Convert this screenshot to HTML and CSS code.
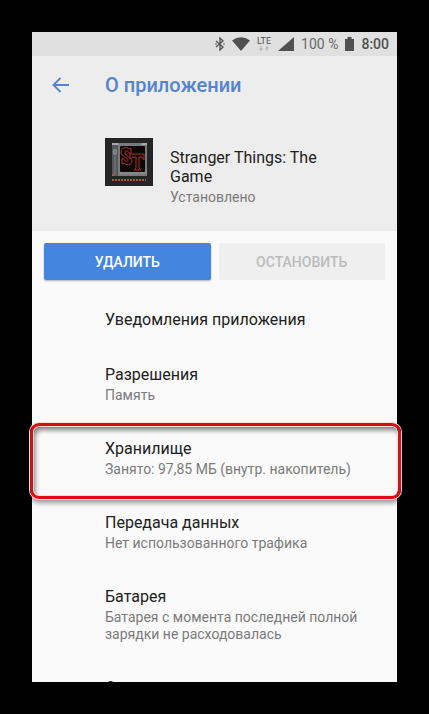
FILE: index.html
```html
<!DOCTYPE html>
<html lang="ru">
<head>
    <meta charset="UTF-8">
    <meta name="viewport" content="width=device-width, initial-scale=1.0">
    <title>О приложении</title>
    <link rel="stylesheet" href="styles.css">
</head>
<body>

    <div class="phone">
        <!-- Строка состояния -->
        <div class="status-bar">
            <svg class="bluetooth" width="10" height="14" viewBox="0 0 10 14" aria-hidden="true">
                <path d="M1 4l7 6-3 3V1l3 3-7 6" fill="none" stroke="#505050" stroke-width="1.3"/>
                <circle cx="1" cy="7" r="0.8" fill="#505050"/>
                <circle cx="9" cy="7" r="0.8" fill="#505050"/>
            </svg>
            <svg class="wifi" width="18" height="14" viewBox="0 0 18 14" aria-hidden="true">
                <path d="M0 3.500Q9-2.800 18 3.500L9 14z" fill="#505050"/>
            </svg>
            <span class="network">
                <span>LTE</span>
                <svg width="12" height="5" viewBox="0 0 12 5" aria-hidden="true">
                    <path d="M3 0v3M9 2v3" stroke="#b0b0b0"/>
                    <path d="M1 2.500h4L3 5zM7 2.500h4L9 0z" fill="#b0b0b0"/>
                </svg>
            </span>
            <svg class="signal" width="16" height="14" viewBox="0 0 16 14" aria-hidden="true">
                <path d="M16 0v14H0z" fill="#505050"/>
            </svg>
            <span class="percent">100 %</span>
            <svg class="battery" width="9" height="14" viewBox="0 0 9 14" aria-hidden="true">
                <path d="M2.500 0h4v2H9v12H0V2h2.500z" fill="#505050"/>
            </svg>
            <span class="clock">8:00</span>
        </div>

        <!-- Шапка -->
        <header class="header">
            <div class="toolbar">
                <a class="back" href="#" aria-label="Назад">
                    <svg width="18" height="16" viewBox="0 0 18 16" aria-hidden="true">
                        <path d="M17 8H2M8.500 1L1.500 8l7 7" fill="none" stroke="#5384d0" stroke-width="1.800"/>
                    </svg>
                </a>
                <h1>О приложении</h1>
            </div>
            <div class="app">
                <svg class="app-icon" width="48" height="48" viewBox="0 0 48 48" aria-hidden="true">
                    <rect width="48" height="48" fill="#262526"/>
                    <path d="M7 5h35v33H7z" fill="#777b7e"/>
                    <path d="M7 5h6l1 2h22l1-2h5v2H7z" fill="#a5a9ac"/>
                    <path d="M7 7h6v31H7z" fill="#54585b"/>
                    <path d="M10 18v19" stroke="#7e8285"/>
                    <rect x="8" y="11" width="4" height="6" rx="2" fill="#92979b"/>
                    <path d="M8.500 13h3M8.500 15h3" stroke="#4c5053" stroke-width="0.700"/>
                    <rect x="15" y="8" width="25" height="26" rx="1" fill="#0d0909"/>
                    <path d="M15 34h25v-3h2v5H14z" fill="#85898b"/>
                    <path d="M26 10v6l-2-1c-1-3-4-2-4 0 0 3 7 4 7 8 0 4-6 5-8 2l-2 1v-6l2 1c1 3 4 3 4 1 0-3-7-3-7-8 0-4 5-6 8-3zM25 16h14v6l-2-3h-3v11l2 2h-7l2-2V19h-3l-3 2z" fill="none" stroke="#b32c22" stroke-width="1"/>
                    <path d="M7 36h3v2H7z" fill="#b65144"/>
                    <path d="M7 42h34" stroke="#b0543f" stroke-width="2" stroke-dasharray="2 1"/>
                </svg>
                <div class="app-text">
                    <h2>Stranger Things: The Game</h2>
                    <p>Установлено</p>
                </div>
            </div>
        </header>

        <div class="actions">
            <button class="btn btn-primary" type="button">Удалить</button>
            <button class="btn" type="button" disabled>Остановить</button>
        </div>

        <!-- Список настроек -->
        <main class="list">
            <a class="item" href="#">
                <span class="item-title">Уведомления приложения</span>
            </a>
            <a class="item" href="#">
                <span class="item-title">Разрешения</span>
                <span class="item-note">Память</span>
            </a>
            <a class="item highlighted" href="#">
                <span class="item-title">Хранилище</span>
                <span class="item-note">Занято: 97,85 МБ (внутр. накопитель)</span>
            </a>
            <a class="item" href="#">
                <span class="item-title">Передача данных</span>
                <span class="item-note">Нет использованного трафика</span>
            </a>
            <a class="item" href="#">
                <span class="item-title">Батарея</span>
                <span class="item-note">Батарея с момента последней полной зарядки не расходовалась</span>
            </a>
            <a class="item" href="#">
                <span class="item-title">Открывать по умолчанию</span>
            </a>
        </main>
    </div>

</body>
</html>
```
FILE: styles.css
```css
* {
    box-sizing: border-box;
}

body {
    margin: 0;
    padding: 32px;
    background: #000000;
    font-family: Roboto, "Noto Sans", sans-serif;
}

h1, h2, p {
    margin: 0;
}

a {
    color: inherit;
    text-decoration: none;
}

svg {
    display: block;
    flex: none;
}

.phone {
    height: calc(100vh - 64px);
    background: #fafafa;
    /* Список обрезается снизу, рамка выходит за края по бокам */
    overflow-x: visible;
    overflow-y: clip;
}

/* Строка состояния */
.status-bar {
    display: flex;
    justify-content: flex-end;
    align-items: center;
    gap: 7px;
    height: 24px;
    padding: 0 8px;
    background: #e0e0e0;
    color: #505050;
    font-size: 14px;
}

.network {
    display: flex;
    flex-direction: column;
    align-items: center;
    font-size: 9px;
    line-height: 9px;
}

.percent {
    color: #686868;
}

.clock {
    font-weight: 500;
}

/* Шапка */
.header {
    height: 175px;
    background: #ededed;
}

.toolbar {
    display: flex;
    align-items: center;
    height: 58px;
    padding-left: 20px;
}

.back {
    width: 53px;
}

h1 {
    color: #5384d0;
    font-size: 20px;
    font-weight: 500;
}

.app {
    display: flex;
    gap: 17px;
    padding: 24px 48px 0 73px;
}

.app-text {
    padding-top: 10px;
}

h2 {
    color: #212121;
    font-size: 16px;
    font-weight: 400;
    line-height: 19px;
}

.app-text p {
    margin-top: 3px;
    color: #7a7a7a;
    font-size: 14px;
    line-height: 17px;
}

/* Кнопки */
.actions {
    display: flex;
    gap: 8px;
    padding: 12px;
}

.btn {
    flex: 1;
    height: 37px;
    padding: 0;
    border: none;
    border-radius: 2px;
    background: #efefef;
    color: #bbbbbb;
    font-family: inherit;
    font-size: 14px;
    font-weight: 500;
    text-transform: uppercase;
}

.btn-primary {
    background: #4485df;
    color: #ffffff;
    box-shadow: 0 1px 2px rgba(0, 0, 0, 0.3);
}

/* Список */
.item {
    display: flex;
    flex-direction: column;
    gap: 2px;
    position: relative;
    padding: 18px 32px 17px 73px;
}

.item-title {
    color: #212121;
    font-size: 16px;
    line-height: 20px;
}

.item-note {
    color: #7a7a7a;
    font-size: 14px;
    line-height: 17px;
}

/* Красная рамка вокруг пункта */
.highlighted::after {
    content: "";
    position: absolute;
    inset: 2px -4px -4px -2px;
    border: 3px solid #d90d12;
    border-radius: 9px;
    box-shadow: 0 0 0 1px #f8ded8, inset 0 0 0 1px #f8ded8, 0 4px 5px rgba(0, 0, 0, 0.4), inset 2px 4px 5px rgba(0, 0, 0, 0.5);
}
```
